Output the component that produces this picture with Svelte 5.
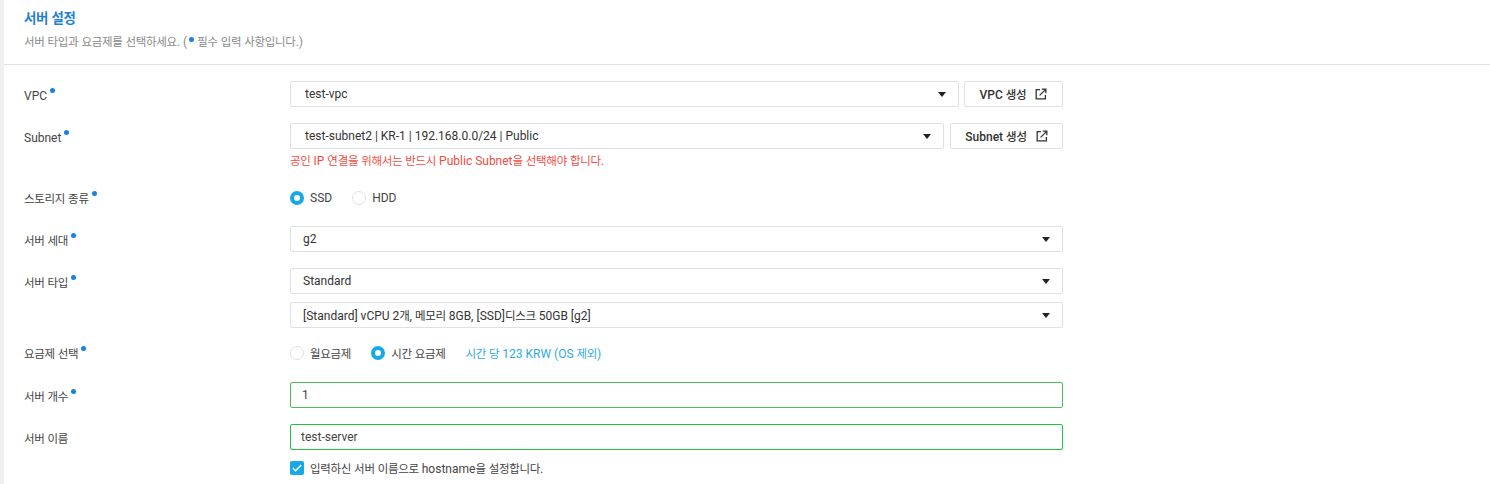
<script>
  // hangul runs get their own span so they can be set a touch narrower than the latin
  function runs(text) {
    return text.split(/([가-힣]+)/).filter(Boolean);
  }
  const isKo = (part) => /[가-힣]/.test(part);
</script>

{#snippet txt(text)}
  {#each runs(text) as part}{#if isKo(part)}<span class="ko">{part}</span>{:else}{part}{/if}{/each}
{/snippet}

{#snippet req(label, required = true, short = false)}
  <div class="label" class:short>
    <span>{@render txt(label)}</span>{#if required}<i class="dot"></i>{/if}
  </div>
{/snippet}

{#snippet select(value)}
  <div class="select">
    <span>{@render txt(value)}</span>
    <b class="caret"></b>
  </div>
{/snippet}

{#snippet linkButton(text)}
  <button class="link-btn" type="button">
    <span>{@render txt(text)}</span>
    <svg width="12" height="12" viewBox="0 0 12 12" fill="none" stroke="#333" stroke-width="1.3">
      <path d="M5 1.6H1.2v9.2h9.2V7" />
      <path d="M4.6 7.4 10.4 1.6M6.8 1.2h4v4" />
    </svg>
  </button>
{/snippet}

{#snippet radio(label, checked)}
  <span class="radio" class:checked>
    <i></i><span>{@render txt(label)}</span>
  </span>
{/snippet}

<div class="page">
  <header class="head">
    <h2>{@render txt("서버 설정")}</h2>
    <p>{@render txt("서버 타입과 요금제를 선택하세요. (")}<i class="dot inline"></i>{@render txt("필수 입력 사항입니다.)")}</p>
  </header>

  <div class="form">
    <div class="row">
      {@render req("VPC")}
      <div class="control inline-row">
        {@render select("test-vpc")}
        {@render linkButton("VPC 생성")}
      </div>
    </div>

    <div class="row">
      {@render req("Subnet")}
      <div class="control">
        <div class="inline-row narrow">
          {@render select("test-subnet2 | KR-1 | 192.168.0.0/24 | Public")}
          {@render linkButton("Subnet 생성")}
        </div>
        <p class="error">{@render txt("공인 IP 연결을 위해서는 반드시 Public Subnet을 선택해야 합니다.")}</p>
      </div>
    </div>

    <div class="row storage">
      {@render req("스토리지 종류", true, true)}
      <div class="control radios">
        {@render radio("SSD", true)}
        {@render radio("HDD", false)}
      </div>
    </div>

    <div class="row">
      {@render req("서버 세대")}
      <div class="control flat">{@render select("g2")}</div>
    </div>

    <div class="row server-type">
      {@render req("서버 타입")}
      <div class="control stack flat">
        {@render select("Standard")}
        {@render select("[Standard] vCPU 2개, 메모리 8GB, [SSD]디스크 50GB [g2]")}
      </div>
    </div>

    <div class="row">
      {@render req("요금제 선택", true, true)}
      <div class="control radios">
        {@render radio("월요금제", false)}
        {@render radio("시간 요금제", true)}
        <span class="price">{@render txt("시간 당 123 KRW (OS 제외)")}</span>
      </div>
    </div>

    <div class="row">
      {@render req("서버 개수")}
      <div class="control"><div class="input valid one">1</div></div>
    </div>

    <div class="row">
      {@render req("서버 이름", false)}
      <div class="control">
        <div class="input valid">test-server</div>
        <div class="check">
          <i>
            <svg width="10" height="8" viewBox="0 0 10 8" fill="none" stroke="#fff" stroke-width="1.5">
              <path d="M.8 4 3.6 6.8 9.2 1" />
            </svg>
          </i>
          <span>{@render txt("입력하신 서버 이름으로 hostname을 설정합니다.")}</span>
        </div>
      </div>
    </div>
  </div>
</div>

<style>
  :global(body) {
    margin: 0;
    background: #fff;
    overflow: hidden;
  }

  .page {
    height: 484px;
    overflow: hidden;
    margin-left: 4px;
    box-shadow: -4px 0 0 #f0f0f0;
    font-family: Roboto, "Noto Sans CJK KR", sans-serif;
    font-size: 12px;
    color: #333;
  }

  .ko {
    font-size: 0.958em;
    letter-spacing: -0.025em;
  }

  .head {
    height: 65px;
    box-sizing: border-box;
    padding: 11px 20px 0;
    border-bottom: 1px solid #e3e3e3;
  }

  .head h2 {
    margin: 0;
    font-size: 14px;
    line-height: 15px;
    font-weight: 700;
    color: #1f80d8;
  }

  .head p {
    margin: 8px 0 0;
    line-height: 16px;
    color: #8a8a8a;
  }

  .form {
    padding: 16px 20px 0;
    display: flex;
    flex-direction: column;
    gap: 16px;
  }

  .row {
    display: flex;
  }

  .storage + .row {
    margin-top: -1px;
  }

  .server-type + .row {
    margin-top: -4px;
  }

  .label {
    width: 266px;
    height: 26px;
    flex: none;
    line-height: 31px;
    color: #444;
  }

  .label.short {
    line-height: 28px;
  }

  .dot {
    display: inline-block;
    width: 5px;
    height: 5px;
    margin-left: 3px;
    border-radius: 50%;
    background: #1a80e0;
    vertical-align: 7px;
  }

  .dot.inline {
    margin: 0 3px 0 2px;
    vertical-align: 4px;
  }

  .control {
    width: 773px;
    flex: none;
  }

  .inline-row {
    display: flex;
    gap: 5px;
  }

  .inline-row .link-btn {
    width: 99px;
  }

  .narrow {
    gap: 6px;
  }

  .narrow .link-btn {
    width: 113px;
  }

  .select {
    flex: 1;
    min-height: 26px;
    box-sizing: border-box;
    display: flex;
    align-items: center;
    justify-content: space-between;
    padding: 0 12px 0 14px;
    background: #fff;
    border: 1px solid #e1e1e1;
    border-radius: 2px;
  }

  .flat .select {
    padding-left: 12px;
  }

  .caret {
    width: 0;
    height: 0;
    border-left: 4px solid transparent;
    border-right: 4px solid transparent;
    border-top: 5px solid #222;
  }

  .link-btn {
    flex: none;
    display: flex;
    align-items: center;
    justify-content: center;
    gap: 9px;
    height: 26px;
    padding: 0;
    background: #fff;
    border: 1px solid #e1e1e1;
    border-radius: 2px;
    font: 500 12px Roboto, "Noto Sans CJK KR", sans-serif;
    color: #333;
  }

  .error {
    margin: 0;
    padding-top: 5px;
    line-height: 15px;
    color: #f24c3f;
  }

  .radios {
    height: 26px;
    display: flex;
    align-items: center;
    gap: 20px;
  }

  .radio {
    display: flex;
    align-items: center;
    gap: 6px;
    color: #444;
  }

  .radio i {
    width: 14px;
    height: 14px;
    box-sizing: border-box;
    border: 1px solid #e1e1e1;
    border-radius: 50%;
    background: #fff;
  }

  .radio.checked i {
    border: 4px solid #17a8e8;
  }

  .price {
    color: #2eaae6;
  }

  .stack {
    display: flex;
    flex-direction: column;
    gap: 8px;
  }

  .input {
    height: 26px;
    box-sizing: border-box;
    padding-left: 10px;
    line-height: 24px;
    border: 1px solid #21c442;
    border-radius: 2px;
    color: #444;
  }

  .input.one {
    border-color: #4fbf57;
    padding-left: 11px;
  }

  .check {
    display: flex;
    align-items: center;
    gap: 6px;
    margin-top: 11px;
    height: 14px;
    color: #444;
  }

  .check i {
    width: 14px;
    height: 14px;
    display: flex;
    align-items: center;
    justify-content: center;
    background: #17a8e8;
    border-radius: 2px;
  }
</style>
